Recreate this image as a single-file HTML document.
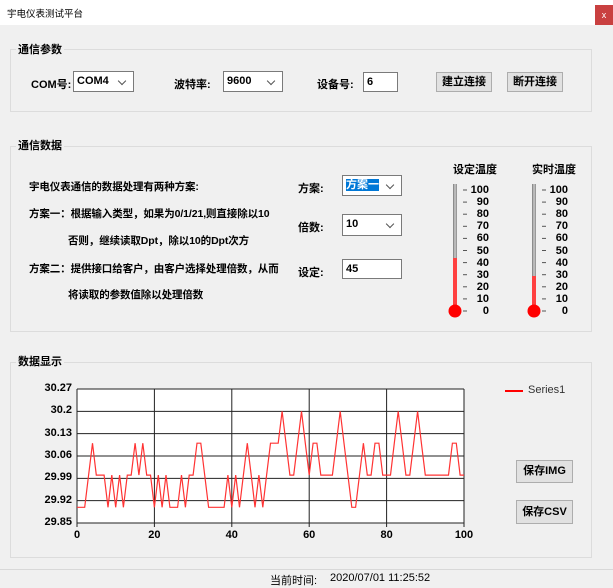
<!DOCTYPE html>
<html><head><meta charset="utf-8"><style>
*{margin:0;padding:0;box-sizing:border-box}
body{width:613px;height:588px;background:#f0f0f0;position:relative;overflow:hidden;font-family:"Liberation Sans","Microsoft YaHei","Noto Sans CJK SC",sans-serif;font-size:11px;color:#000}
.a{position:absolute;white-space:nowrap}
.b{font-weight:bold}
.t{font-size:10.5px;letter-spacing:-0.1px}
.grp{position:absolute;border:1px solid #dcdcdc}
.gt{position:absolute;background:#f0f0f0;font-weight:bold;padding:0 2px;line-height:14px}
.inp{position:absolute;background:#fff;border:1px solid #7a7a7a;font-weight:bold;padding-left:3px;line-height:19px}
.cb::after{content:"";position:absolute;right:8px;top:6px;width:5px;height:5px;border-right:1px solid #555;border-bottom:1px solid #555;transform:rotate(45deg)}
.btn{position:absolute;background:#e1e1e1;border:1px solid #adadad;font-weight:bold;text-align:center}
.tk{position:absolute;font-weight:bold;font-size:11px;line-height:12px}
</style></head><body>
<div class="a" style="left:0;top:0;width:613px;height:25px;background:#fff"></div>
<div class="a" style="left:7px;top:6px;font-size:9.5px">宇电仪表测试平台</div>
<div class="a" style="left:595px;top:5px;width:18px;height:20px;background:#c94040;color:#fff;font-size:9px;text-align:center;line-height:20px">x</div>

<div class="grp" style="left:10px;top:49px;width:582px;height:63px"></div>
<div class="gt" style="left:16px;top:43px">通信参数</div>
<div class="a b" style="left:31px;top:76px">COM号:</div>
<div class="inp cb" style="left:73px;top:71px;width:61px;height:21px">COM4</div>
<div class="a b" style="left:174px;top:76px">波特率:</div>
<div class="inp cb" style="left:223px;top:71px;width:60px;height:21px">9600</div>
<div class="a b" style="left:317px;top:76px">设备号:</div>
<div class="inp" style="left:363px;top:72px;width:35px;height:20px">6</div>
<div class="btn" style="left:436px;top:72px;width:56px;height:20px;line-height:18px">建立连接</div>
<div class="btn" style="left:507px;top:72px;width:56px;height:20px;line-height:18px">断开连接</div>

<div class="grp" style="left:10px;top:146px;width:582px;height:186px"></div>
<div class="gt" style="left:16px;top:139px">通信数据</div>
<div class="a b t" style="left:29px;top:179px">宇电仪表通信的数据处理有两种方案:</div>
<div class="a b t" style="left:29px;top:206px">方案一：根据输入类型，如果为0/1/21,则直接除以10</div>
<div class="a b t" style="left:68px;top:233px">否则，继续读取Dpt，除以10的Dpt次方</div>
<div class="a b t" style="left:29px;top:261px">方案二：提供接口给客户，由客户选择处理倍数，从而</div>
<div class="a b t" style="left:68px;top:287px">将读取的参数值除以处理倍数</div>
<div class="a b" style="left:298px;top:180px">方案:</div>
<div class="inp cb" style="left:342px;top:175px;width:60px;height:21px"><span style="background:#0078d7;color:#fff">方案一</span></div>
<div class="a b" style="left:298px;top:219px">倍数:</div>
<div class="inp cb" style="left:342px;top:214px;width:60px;height:22px">10</div>
<div class="a b" style="left:298px;top:264px">设定:</div>
<div class="inp" style="left:342px;top:259px;width:60px;height:20px">45</div>

<div class="a b" style="left:453px;top:161px">设定温度</div>
<div class="a b" style="left:532px;top:161px">实时温度</div>
<svg class="a" style="left:0;top:0" width="613" height="588">
<defs><linearGradient id="g" x1="0" x2="1"><stop offset="0" stop-color="#777"/><stop offset=".5" stop-color="#ccc"/><stop offset="1" stop-color="#888"/></linearGradient></defs>
<rect x="453" y="184" width="4" height="128" fill="url(#g)"/><rect x="453" y="258" width="4" height="54" fill="#ff4040"/><circle cx="455" cy="311" r="6.5" fill="#f00"/>
<rect x="532" y="184" width="4" height="128" fill="url(#g)"/><rect x="532" y="276" width="4" height="36" fill="#ff4040"/><circle cx="534" cy="311" r="6.5" fill="#f00"/>
<g stroke="#555" stroke-width="1" id="tks"></g>
<g id="chart"></g>
</svg>
<div id="lbls"></div>

<div class="grp" style="left:10px;top:362px;width:582px;height:196px"></div>
<div class="gt" style="left:16px;top:355px">数据显示</div>
<div class="a" style="left:505px;top:390px;width:18px;height:2px;background:#f00"></div>
<div class="a" style="left:528px;top:384px;font-size:11px;color:#333">Series1</div>
<div class="btn" style="left:516px;top:460px;width:57px;height:23px;line-height:21px">保存IMG</div>
<div class="btn" style="left:516px;top:500px;width:57px;height:24px;line-height:22px">保存CSV</div>

<div class="a" style="left:0;top:569px;width:613px;height:1px;background:#d8d8d8"></div>
<div class="a" style="left:270px;top:572px">当前时间:</div>
<div class="a" style="left:330px;top:572px">2020/07/01 11:25:52</div>
<script>
var tk=document.getElementById('tks'),L=document.getElementById('lbls'),h='',s='';
for(var i=0;i<=10;i++){var y=190+i*12.1;[[463,489],[542,568]].forEach(function(p){s+='<line x1="'+p[0]+'" x2="'+(p[0]+4)+'" y1="'+y+'" y2="'+y+'"/>';h+='<div class="tk" style="left:'+(p[1]-30)+'px;width:30px;text-align:right;top:'+(y-6)+'px">'+(100-i*10)+'</div>';});}
tk.innerHTML=s;
var c='';var x0=77,x1=464,y0=389,y1=523;
c+='<rect x="'+x0+'" y="'+y0+'" width="'+(x1-x0)+'" height="'+(y1-y0)+'" fill="#fff"/>';
for(var k=0;k<=6;k++){var y=y0+k*(y1-y0)/6;c+='<line x1="'+x0+'" x2="'+x1+'" y1="'+y+'" y2="'+y+'" stroke="#222"/>';h+='<div class="tk" style="left:20px;width:52px;text-align:right;top:'+(y-7)+'px;font-size:11px">'+['30.27','30.2','30.13','30.06','29.99','29.92','29.85'][k]+'</div>';}
for(var k=0;k<=5;k++){var x=x0+k*(x1-x0)/5;c+='<line x1="'+x+'" x2="'+x+'" y1="'+y0+'" y2="'+(y1+4)+'" stroke="#222"/>';h+='<div class="tk" style="left:'+(x-20)+'px;width:40px;text-align:center;top:529px;font-size:11px">'+(k*20)+'</div>';}
var d=[9,9,9,0,1,0,0,0,9,0,9,0,9,0,0,1,0,1,0,0,9,0,9,0,9,9,9,0,9,0,0,1,1,0,9,9,9,9,9,0,9,0,9,0,1,0,9,0,9,0,1,1,1,2,1,0,0,1,2,1,0,1,1,0,0,0,0,1,2,1,0,9,9,0,1,0,0,1,1,0,0,0,1,2,1,0,0,1,2,1,0,0,0,0,0,0,0,1,1,0,0];
var lv={9:507.3,0:475.1,1:443.2,2:411.3};var p=[];
for(var i=0;i<d.length;i++)p.push((x0+i*(x1-x0)/100).toFixed(1)+','+lv[d[i]]);
c+='<polyline points="'+p.join(' ')+'" fill="none" stroke="#f33" stroke-width="1.2"/>';
document.getElementById('chart').innerHTML=c;
L.innerHTML=h;
</script>
</body></html>
